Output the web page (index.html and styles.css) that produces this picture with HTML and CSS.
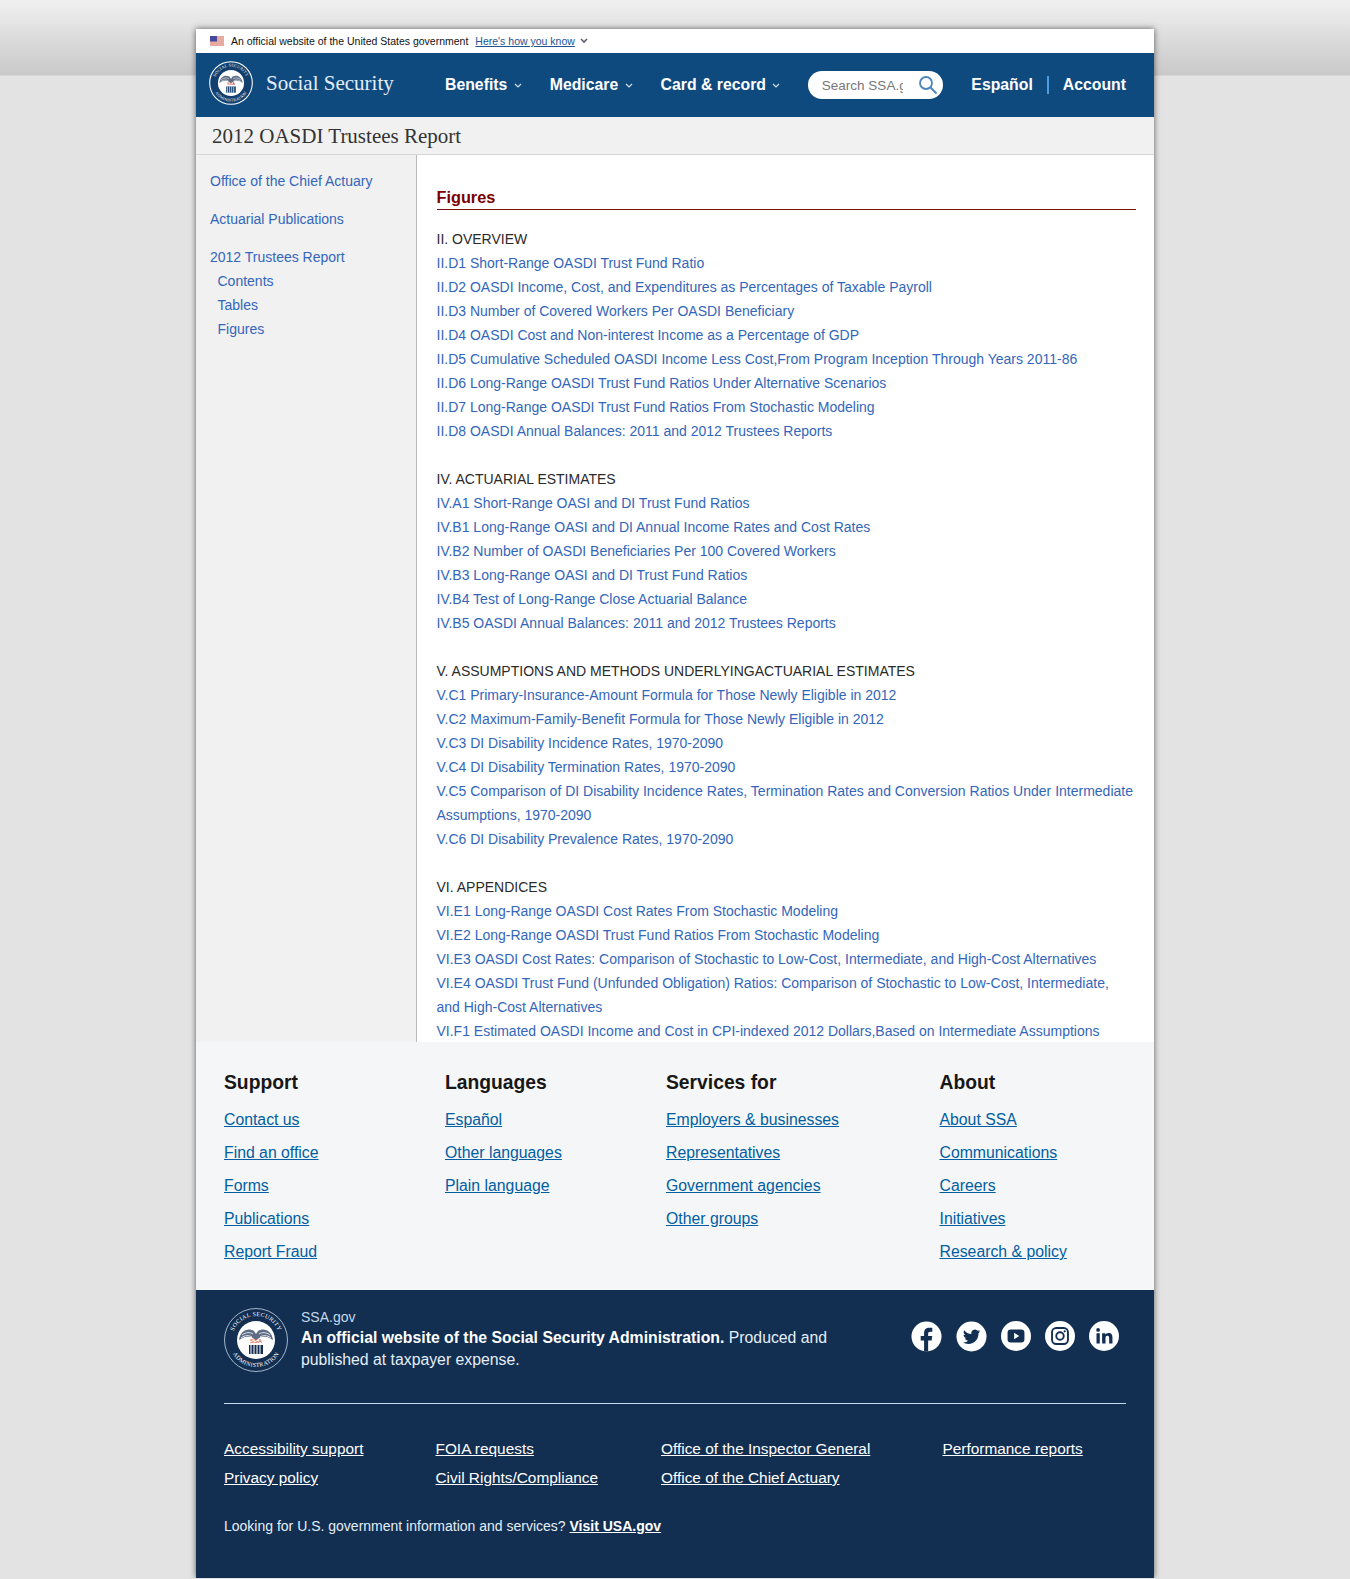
FILE: index.html
```html
<!DOCTYPE html>
<html lang="en">
<head>
    <meta charset="UTF-8">
    <title>2012 OASDI Trustees Report</title>
    <link rel="stylesheet" href="styles.css">
</head>
<body>
    <div class="page">
        <div class="gov-banner">
            <svg class="flag" width="14" height="10" viewBox="0 0 14 10">
                <rect width="14" height="10" fill="#f3f3f3"/>
                <path d="M0 1h14M0 3h14M0 5h14M0 7h14M0 9h14" stroke="#d9644f" stroke-width="1"/>
                <rect width="7" height="5.5" fill="#47479c"/>
            </svg>
            <span>An official website of the United States government</span>
            <a href="#">Here's how you know</a>
            <svg class="banner-chevron" width="8" height="6" viewBox="0 0 8 6"><path d="M1 1l3 3 3-3" fill="none" stroke="#5b616b" stroke-width="1.6"/></svg>
        </div>

        <header class="site-header">
            <a class="brand" href="#">
                <svg class="brand-seal" width="44" height="44" viewBox="0 0 64 64">
                    <circle cx="32" cy="32" r="31" fill="none" stroke="#fff" stroke-width="1.500"/>
                    <circle cx="32" cy="32" r="29" fill="#123f6d"/>
                    <circle cx="32" cy="32" r="19" fill="#fff"/>
                    <path id="topArcA" d="M8 32a24 24 0 0 1 48 0" fill="none"/>
                    <path id="bottomArcA" d="M5 32a27 27 0 0 0 54 0" fill="none"/>
                    <text class="seal-text"><textPath href="#topArcA" startOffset="50%" text-anchor="middle">SOCIAL SECURITY</textPath></text>
                    <text class="seal-text"><textPath href="#bottomArcA" startOffset="50%" text-anchor="middle">ADMINISTRATION</textPath></text>
                    <path d="M15 32c1-9 9-13 15-9l2 3 2-3c6-4 14 0 15 9-4-3-8-4-12-3l-5 3-5-3c-4-1-8 0-12 3z" fill="#5d6b84"/>
                    <path d="M18 27c4-3 8-3 11-1M46 27c-4-3-8-3-11-1M17 30c4-3 8-3 11-1M47 30c-4-3-8-3-11-1" fill="none" stroke="#fff" stroke-width=".8"/>
                    <text class="seal-mark" x="32" y="35" text-anchor="middle">SSA</text>
                    <path d="M25 37h14v9H25z" fill="#123f6d"/>
                    <path d="M27 37v9M30 37v9M33 37v9M36 37v9" stroke="#fff" stroke-width="1"/>
                </svg>
                <span>Social Security</span>
            </a>
            <nav class="main-nav">
                <a href="#">Benefits <svg width="8" height="6" viewBox="0 0 8 6"><path d="M1 1l3 3 3-3" fill="none" stroke="#cfe0ee" stroke-width="1.2"/></svg></a>
                <a href="#">Medicare <svg width="8" height="6" viewBox="0 0 8 6"><path d="M1 1l3 3 3-3" fill="none" stroke="#cfe0ee" stroke-width="1.2"/></svg></a>
                <a href="#">Card &amp; record <svg width="8" height="6" viewBox="0 0 8 6"><path d="M1 1l3 3 3-3" fill="none" stroke="#cfe0ee" stroke-width="1.2"/></svg></a>
            </nav>
            <div class="search">
                <input type="text" placeholder="Search SSA.gov">
                <svg width="20" height="20" viewBox="0 0 20 20"><circle cx="8" cy="8" r="6" fill="none" stroke="#4a86bd" stroke-width="1.8"/><path d="M12.5 12.5l6 6" stroke="#4a86bd" stroke-width="2"/></svg>
            </div>
            <div class="header-links">
                <a href="#">Español</a>
                <a href="#">Account</a>
            </div>
        </header>

        <div class="title-bar">2012 OASDI Trustees Report</div>

        <div class="main-row">
            <aside class="sidebar">
                <a href="#">Office of the Chief Actuary</a>
                <a href="#">Actuarial Publications</a>
                <a href="#">2012 Trustees Report</a>
                <ul>
                    <li><a href="#">Contents</a></li>
                    <li><a href="#">Tables</a></li>
                    <li><a href="#">Figures</a></li>
                </ul>
            </aside>

            <main class="content">
                <h2>Figures</h2>

                <div class="group">
                    <p>II. OVERVIEW</p>
                    <a href="#">II.D1 Short-Range OASDI Trust Fund Ratio</a>
                    <a href="#">II.D2 OASDI Income, Cost, and Expenditures as Percentages of Taxable Payroll</a>
                    <a href="#">II.D3 Number of Covered Workers Per OASDI Beneficiary</a>
                    <a href="#">II.D4 OASDI Cost and Non-interest Income as a Percentage of GDP</a>
                    <a href="#">II.D5 Cumulative Scheduled OASDI Income Less Cost,From Program Inception Through Years 2011-86</a>
                    <a href="#">II.D6 Long-Range OASDI Trust Fund Ratios Under Alternative Scenarios</a>
                    <a href="#">II.D7 Long-Range OASDI Trust Fund Ratios From Stochastic Modeling</a>
                    <a href="#">II.D8 OASDI Annual Balances: 2011 and 2012 Trustees Reports</a>
                </div>

                <div class="group">
                    <p>IV. ACTUARIAL ESTIMATES</p>
                    <a href="#">IV.A1 Short-Range OASI and DI Trust Fund Ratios</a>
                    <a href="#">IV.B1 Long-Range OASI and DI Annual Income Rates and Cost Rates</a>
                    <a href="#">IV.B2 Number of OASDI Beneficiaries Per 100 Covered Workers</a>
                    <a href="#">IV.B3 Long-Range OASI and DI Trust Fund Ratios</a>
                    <a href="#">IV.B4 Test of Long-Range Close Actuarial Balance</a>
                    <a href="#">IV.B5 OASDI Annual Balances: 2011 and 2012 Trustees Reports</a>
                </div>

                <div class="group">
                    <p>V. ASSUMPTIONS AND METHODS UNDERLYINGACTUARIAL ESTIMATES</p>
                    <a href="#">V.C1 Primary-Insurance-Amount Formula for Those Newly Eligible in 2012</a>
                    <a href="#">V.C2 Maximum-Family-Benefit Formula for Those Newly Eligible in 2012</a>
                    <a href="#">V.C3 DI Disability Incidence Rates, 1970-2090</a>
                    <a href="#">V.C4 DI Disability Termination Rates, 1970-2090</a>
                    <a href="#">V.C5 Comparison of DI Disability Incidence Rates, Termination Rates and Conversion Ratios Under Intermediate Assumptions, 1970-2090</a>
                    <a href="#">V.C6 DI Disability Prevalence Rates, 1970-2090</a>
                </div>

                <div class="group">
                    <p>VI. APPENDICES</p>
                    <a href="#">VI.E1 Long-Range OASDI Cost Rates From Stochastic Modeling</a>
                    <a href="#">VI.E2 Long-Range OASDI Trust Fund Ratios From Stochastic Modeling</a>
                    <a href="#">VI.E3 OASDI Cost Rates: Comparison of Stochastic to Low-Cost, Intermediate, and High-Cost Alternatives</a>
                    <a href="#">VI.E4 OASDI Trust Fund (Unfunded Obligation) Ratios: Comparison of Stochastic to Low-Cost, Intermediate, and High-Cost Alternatives</a>
                    <a href="#">VI.F1 Estimated OASDI Income and Cost in CPI-indexed 2012 Dollars,Based on Intermediate Assumptions</a>
                </div>
            </main>
        </div>

        <section class="footer-links">
            <div>
                <h3>Support</h3>
                <a href="#">Contact us</a>
                <a href="#">Find an office</a>
                <a href="#">Forms</a>
                <a href="#">Publications</a>
                <a href="#">Report Fraud</a>
            </div>
            <div>
                <h3>Languages</h3>
                <a href="#">Español</a>
                <a href="#">Other languages</a>
                <a href="#">Plain language</a>
            </div>
            <div>
                <h3>Services for</h3>
                <a href="#">Employers &amp; businesses</a>
                <a href="#">Representatives</a>
                <a href="#">Government agencies</a>
                <a href="#">Other groups</a>
            </div>
            <div>
                <h3>About</h3>
                <a href="#">About SSA</a>
                <a href="#">Communications</a>
                <a href="#">Careers</a>
                <a href="#">Initiatives</a>
                <a href="#">Research &amp; policy</a>
            </div>
        </section>

        <footer class="site-footer">
            <div class="footer-top">
                <svg class="footer-seal" width="64" height="64" viewBox="0 0 64 64">
                    <circle cx="32" cy="32" r="31.500" fill="none" stroke="#c5d9ea" stroke-width=".8"/>
                    <circle cx="32" cy="32" r="19" fill="#fff"/>
                    <path id="topArcB" d="M8 32a24 24 0 0 1 48 0" fill="none"/>
                    <path id="bottomArcB" d="M5 32a27 27 0 0 0 54 0" fill="none"/>
                    <text class="seal-text"><textPath href="#topArcB" startOffset="50%" text-anchor="middle">SOCIAL SECURITY</textPath></text>
                    <text class="seal-text"><textPath href="#bottomArcB" startOffset="50%" text-anchor="middle">ADMINISTRATION</textPath></text>
                    <path d="M15 32c1-9 9-13 15-9l2 3 2-3c6-4 14 0 15 9-4-3-8-4-12-3l-5 3-5-3c-4-1-8 0-12 3z" fill="#5d6b84"/>
                    <path d="M18 27c4-3 8-3 11-1M46 27c-4-3-8-3-11-1M17 30c4-3 8-3 11-1M47 30c-4-3-8-3-11-1" fill="none" stroke="#fff" stroke-width=".8"/>
                    <text class="seal-mark" x="32" y="35" text-anchor="middle">SSA</text>
                    <path d="M25 37h14v9H25z" fill="#122e51"/>
                    <path d="M27 37v9M30 37v9M33 37v9M36 37v9" stroke="#fff" stroke-width="1"/>
                </svg>
                <div class="footer-about">
                    <div class="footer-domain">SSA.gov</div>
                    <p><strong>An official website of the Social Security Administration.</strong> Produced and published at taxpayer expense.</p>
                </div>
                <div class="social">
                    <svg width="31" height="31" viewBox="0 0 32 32"><circle cx="16" cy="16" r="15.5" fill="#fff"/><path d="M13.5 31.5V20H10v-4.500h3.500v-3c0-3.600 2.100-5.500 5.300-5.500 1.500 0 2.700.1 3.200.2v3.900h-2.200c-1.700 0-2.100.8-2.100 2v2.400h4.200l-.6 4.500h-3.600v11.500z" fill="#122e51"/></svg>
                    <svg width="31" height="31" viewBox="0 0 32 32"><circle cx="16" cy="16" r="15.500" fill="#fff"/><path d="M25 10.600c-.7.300-1.400.5-2.100.6.800-.5 1.300-1.200 1.600-2-.7.400-1.500.7-2.300.9a3.700 3.700 0 0 0-6.300 3.400c-3-.2-5.700-1.600-7.500-3.900-1 1.700-.5 3.800 1.100 4.900-.6 0-1.200-.2-1.700-.4 0 1.800 1.300 3.300 3 3.700-.5.100-1.100.2-1.700.1.500 1.500 1.900 2.500 3.500 2.600A7.500 7.500 0 0 1 7 22c1.700 1.100 3.700 1.700 5.700 1.700 6.900 0 10.800-5.800 10.500-11.100.7-.5 1.300-1.200 1.800-2z" fill="#122e51"/></svg>
                    <svg width="30" height="30" viewBox="0 0 32 32"><circle cx="16" cy="16" r="16" fill="#fff"/><rect x="7" y="9" width="18" height="14" rx="3.500" fill="#122e51"/><path d="M14 12.500v7l5.500-3.500z" fill="#fff"/></svg>
                    <svg width="30" height="30" viewBox="0 0 32 32"><circle cx="16" cy="16" r="16" fill="#fff"/><rect x="7.500" y="7.500" width="17" height="17" rx="4.500" fill="none" stroke="#122e51" stroke-width="2"/><circle cx="16" cy="16" r="4" fill="none" stroke="#122e51" stroke-width="2"/><circle cx="21" cy="11" r="1.200" fill="#122e51"/></svg>
                    <svg width="30" height="30" viewBox="0 0 32 32"><circle cx="16" cy="16" r="16" fill="#fff"/><path d="M8 13h3.500v11H8zM9.700 7.500a2 2 0 1 1 0 4 2 2 0 0 1 0-4zM14 13h3.300v1.600c.6-1 1.800-1.900 3.600-1.900 3.400 0 4.100 2.200 4.100 5.200V24h-3.500v-5.400c0-1.300 0-2.900-1.800-2.900s-2.100 1.400-2.100 2.800V24H14z" fill="#122e51"/></svg>
                </div>
            </div>

            <div class="footer-bottom">
                <a href="#">Accessibility support</a>
                <a href="#">FOIA requests</a>
                <a href="#">Office of the Inspector General</a>
                <a href="#">Performance reports</a>
                <a href="#">Privacy policy</a>
                <a href="#">Civil Rights/Compliance</a>
                <a href="#">Office of the Chief Actuary</a>
            </div>

            <p class="usa-line">Looking for U.S. government information and services? <a href="#">Visit USA.gov</a></p>
        </footer>
    </div>
</body>
</html>
```

FILE: styles.css
```css
/* Page background */
body {
    margin: 0;
    padding: 29px 0 0;
    background: linear-gradient(#f0f0f0 0, #c9c9c9 75px, #e3e3e3 76px) no-repeat, #e3e3e3;
    font-family: "Liberation Sans", Arial, sans-serif;
    font-size: 14px;
    color: #212121;
}

.page {
    width: 958px;
    height: 1549px;
    margin-left: 196px;
    background: #fff;
    box-shadow: 0 0 6px rgba(0,0,0,0.6);
    overflow: hidden;
}

.seal-text {
    font-family: "Liberation Serif", serif;
    font-size: 6px;
    fill: #fff;
    letter-spacing: 0.3px;
}

.seal-mark {
    font-family: "Liberation Sans", sans-serif;
    font-size: 6px;
    fill: #c9403a;
}

/* Official banner */
.gov-banner {
    height: 24px;
    display: flex;
    align-items: center;
    padding-left: 14px;
    font-size: 10.500px;
    color: #111;
}

.flag {
    margin-right: 7px;
}

.gov-banner a {
    margin-left: 7px;
    color: #205493;
}

.banner-chevron {
    margin-left: 5px;
}

/* Header */
.site-header {
    height: 64px;
    display: flex;
    align-items: center;
    background: #0f4a7f;
}

.brand {
    display: flex;
    align-items: center;
    width: 249px;
    padding: 0 0 4px 13px;
    box-sizing: border-box;
    color: #e4eef7;
    font-family: "Liberation Serif", serif;
    font-size: 21px;
    text-decoration: none;
}

.brand-seal {
    margin-right: 13px;
}

.main-nav {
    display: flex;
    gap: 28px;
}

.main-nav a,
.header-links a {
    color: #fff;
    font-size: 15.800px;
    font-weight: bold;
    text-decoration: none;
}

.main-nav svg {
    margin-left: 2px;
    vertical-align: 1px;
}

.search {
    display: flex;
    align-items: center;
    justify-content: space-between;
    width: 135px;
    height: 28px;
    margin-left: 28px;
    padding: 0 5px 0 13.500px;
    box-sizing: border-box;
    background: #fff;
    border-radius: 14px;
}

.search input {
    width: 81px;
    padding: 0;
    border: none;
    outline: none;
    font-family: inherit;
    font-size: 13.500px;
}

.search input::placeholder {
    color: #777;
}

.header-links {
    display: flex;
    margin-left: 28px;
}

.header-links a + a {
    margin-left: 14px;
    padding-left: 16px;
    background: linear-gradient(#4d9be0, #4d9be0) no-repeat 0 0 / 2px 19px;
}

/* Title */
.title-bar {
    height: 38px;
    line-height: 39px;
    padding-left: 16px;
    background: #f1f1f1;
    border-bottom: 1px solid #d6d6d6;
    box-sizing: border-box;
    font-family: "Liberation Serif", serif;
    font-size: 21px;
    color: #333;
}

/* Main */
.main-row {
    display: flex;
    height: 887px;
}

.sidebar {
    width: 221px;
    padding: 14px 0 0 14px;
    box-sizing: border-box;
    background: #f1f1f1;
    border-right: 1px solid #bbb;
}

.sidebar a {
    display: block;
    line-height: 24px;
    margin-bottom: 14px;
    color: #3366bb;
    text-decoration: none;
}

.sidebar ul {
    margin: -14px 0 0;
    padding: 0 0 0 7.500px;
    list-style: none;
}

.sidebar li a {
    margin-bottom: 0;
}

.content {
    flex: 1;
    padding: 32px 18px 0 19.500px;
    overflow: hidden;
}

.content h2 {
    margin: 0 0 17px;
    padding-bottom: 1px;
    border-bottom: 1px solid #7a1010;
    color: #7a0000;
    font-size: 16.300px;
    line-height: 21px;
}

.group {
    margin-bottom: 24px;
    padding-right: 2px;
    line-height: 24px;
}

.group p {
    margin: 0;
    color: #2a2a2a;
}

.group a {
    display: block;
    color: #3366bb;
    text-decoration: none;
}

/* Footer links */
.footer-links {
    display: grid;
    grid-template-columns: 221px 221px 273.500px auto;
    height: 248px;
    padding: 29px 28px 0;
    box-sizing: border-box;
    background: #f5f6f7;
}

.footer-links h3 {
    margin: 0 0 15px;
    font-size: 19.300px;
    line-height: 24px;
    color: #171717;
}

.footer-links a {
    display: block;
    width: fit-content;
    margin-bottom: 14px;
    line-height: 19px;
    font-size: 15.800px;
    color: #005ea2;
}

/* Dark footer */
.site-footer {
    height: 289px;
    padding: 0 28px;
    background: #122e51;
    color: #e4eef7;
    font-size: 15.800px;
}

.footer-top {
    display: flex;
    height: 114px;
    padding-top: 18px;
    box-sizing: border-box;
    border-bottom: 1px solid #c5d9ea;
}

.footer-seal {
    flex: none;
    margin-right: 13px;
}

.footer-about {
    width: 545px;
}

.footer-domain {
    font-size: 14px;
    line-height: 19px;
    color: #c5d9ea;
}

.footer-about p {
    margin: 0;
    line-height: 22px;
}

.footer-about strong {
    color: #fff;
}

.social {
    display: flex;
    align-items: center;
    gap: 14px;
    height: 32px;
    margin: 12px 0 0 auto;
    padding-right: 7px;
}

.footer-bottom {
    display: grid;
    grid-template-columns: 211.500px 225.500px 281.500px auto;
    row-gap: 10px;
    padding-top: 35px;
}

.footer-bottom a {
    width: fit-content;
    line-height: 19px;
    font-size: 15.400px;
    color: #fff;
}

.usa-line {
    margin: 31px 0 0;
    font-size: 14px;
}

.usa-line a {
    color: #fff;
    font-weight: bold;
}
```
